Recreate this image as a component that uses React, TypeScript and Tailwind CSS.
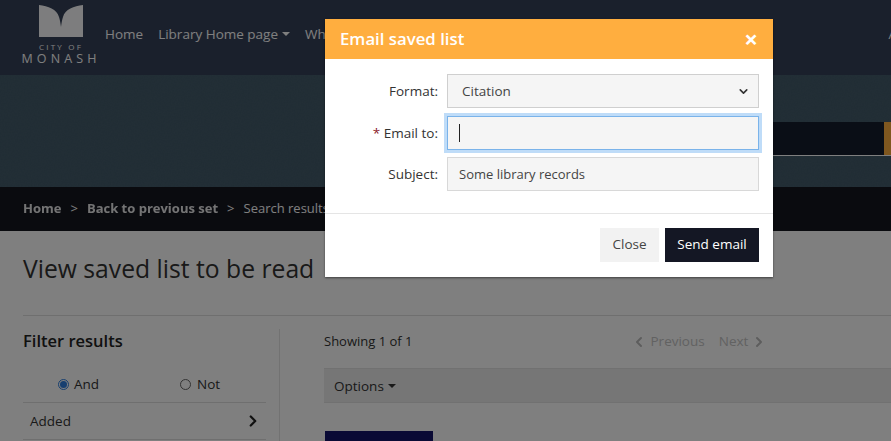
import React from "react";
import { ChevronDown, ChevronLeft, ChevronRight } from "lucide-react";

function Caret({ className = "" }: { className?: string }) {
  return <span className={`inline-block w-0 h-0 border-x-[4px] border-x-transparent border-t-[4px] border-t-current ${className}`} />;
}

function Logo() {
  return (
    <div className="flex flex-col items-center w-[78px] ml-[22px] pt-[5px]">
      <svg width="44" height="33" viewBox="0 0 44 33" className="block">
        <path d="M0 0 C9 1 18 4 20 12 C21 15 21.5 18 22 22 C22.5 18 23 15 24 12 C26 4 35 1 44 0 L44 32 L0 32 Z" fill="#fff" fillOpacity="0.98" />
      </svg>
      <div className="mt-[4px] mb-[1px] text-[8px] leading-[9px] tracking-[2.2px] text-white">CITY OF</div>
      <div className="text-[12.5px] leading-[13px] tracking-[4.1px] text-white whitespace-nowrap">MONASH</div>
    </div>
  );
}

function Field({ label, required, children }: { label: string; required?: boolean; children: React.ReactNode }) {
  return (
    <div className="flex items-center">
      <label className="w-[113px] text-right text-[13.5px] text-[#333]">
        {required && <span className="text-[#8b1a2b]">* </span>}
        {label}
      </label>
      <div className="ml-[9px] w-[312px]">{children}</div>
    </div>
  );
}

export default function App() {
  return (
    <div className="relative w-[891px] h-[441px] overflow-hidden bg-white font-['Open_Sans',sans-serif] text-[#333]">
      {/* Nav */}
      <nav className="h-[75px] bg-[#354159] flex items-start">
        <Logo />
        <div className="ml-[5px] mt-[24px] flex items-center text-[13.5px] leading-[20px] text-white whitespace-nowrap w-[792px] shrink-0">
          <span>Home</span>
          <span className="ml-[15px]">Library Home page</span>
          <Caret className="ml-[4px]" />
          <span className="ml-[15px]">What's</span>
          <span className="ml-auto">A</span>
        </div>
      </nav>

      {/* Hero */}
      <section className="relative h-[112px] bg-[#415a69] overflow-hidden">
        <svg className="absolute inset-0 w-full h-full opacity-30" aria-hidden="true">
          <filter id="grain">
            <feTurbulence type="fractalNoise" baseFrequency="0.7" numOctaves="2" />
            <feColorMatrix values="0 0 0 0 0.1  0 0 0 0 0.15  0 0 0 0 0.2  0 0 0 1.2 -0.2" />
          </filter>
          <rect width="100%" height="100%" filter="url(#grain)" />
        </svg>
        <div className="relative mt-[47px] ml-[400px] h-[34px] flex bg-[#141c2c] border-b border-b-white">
          <div className="flex-1" />
          <div className="w-[7px] bg-[#ffae3f]" />
        </div>
      </section>

      {/* Breadcrumb */}
      <div className="h-[44px] bg-[#14161f] flex items-center pl-[23px] text-[13px] text-white whitespace-nowrap">
        <span className="font-bold opacity-90">Home</span>
        <span className="mx-[9px]">&gt;</span>
        <span className="font-bold opacity-90">Back to previous set</span>
        <span className="mx-[9px]">&gt;</span>
        <span>Search results</span>
      </div>

      {/* Main */}
      <main className="pl-[23px]">
        <h1 className="pt-[21px] pb-[30px] text-[24.7px] leading-[33px] font-medium text-[#333] border-b border-b-[#dedede] whitespace-nowrap">
          View saved list to be read
        </h1>
        <div className="flex mt-[14px]">
          <aside className="w-[256px] shrink-0">
            <h2 className="text-[16.5px] leading-[22px] font-semibold text-[#222]">Filter results</h2>
            <div className="flex mt-[23px] pl-[35px] pb-[8px] border-b border-b-[#dedede] w-[243px] text-[13.5px] leading-[19px]">
              <label className="flex items-center w-[122px]">
                <span className="w-[11px] h-[11px] rounded-full border border-[#2f7fe0] bg-white flex items-center justify-center mr-[5px]">
                  <span className="w-[7px] h-[7px] rounded-full bg-[#2f7fe0]" />
                </span>
                And
              </label>
              <label className="flex items-center">
                <span className="w-[11px] h-[11px] rounded-full border border-[#666] bg-white mr-[6px]" />
                Not
              </label>
            </div>
            <div className="flex items-center justify-between w-[243px] h-[37px] pl-[7px] pr-[4px] border-b border-b-[#dedede] text-[13.5px]">
              <span>Added</span>
              <ChevronRight size={18} strokeWidth={3} className="text-[#222]" />
            </div>
          </aside>
          <div className="w-px h-[130px] bg-[#e4e4e4] -mt-[1px]" />
          <section className="ml-[44px] flex-1">
            <div className="flex items-center h-[22px] pt-[1px] text-[13px]">
              <span>Showing 1 of 1</span>
              <div className="ml-[218px] flex items-center text-[13.5px] text-[#c4c4c4]">
                <ChevronLeft size={16} strokeWidth={3} className="text-[#bbb]" />
                <span className="ml-[4px]">Previous</span>
                <span className="ml-[14px]">Next</span>
                <ChevronRight size={16} strokeWidth={3} className="ml-[3px] text-[#bbb]" />
              </div>
            </div>
            <div className="mt-[16px] h-[35px] flex items-center pl-[10px] pt-[1px] bg-[#ececec] border-y border-y-[#e2e2e2] text-[13.5px]">
              Options
              <Caret className="ml-[4px]" />
            </div>
            <div className="mt-[28px] ml-px w-[108px] h-[40px] bg-[#14146a]" />
          </section>
        </div>
      </main>

      {/* Backdrop */}
      <div className="absolute inset-0 bg-black/50" />

      {/* Modal */}
      <div role="dialog" className="absolute left-[325px] top-[19px] w-[448px] h-[258px] bg-white flex flex-col shadow-[0_1px_2px_rgba(0,0,0,0.5)]">
        <div className="h-[40px] bg-[#ffae3f] flex items-center justify-between pl-[15px] pr-[15px] text-white">
          <span className="text-[16.8px] font-semibold">Email saved list</span>
          <span className="text-[24px] font-bold leading-none">×</span>
        </div>
        <div className="flex-1 flex flex-col gap-[7px] pt-[15px] border-b border-b-[#e5e5e5]">
          <Field label="Format:">
            <div className="h-[34px] bg-[#f5f5f5] border border-[#cfcfcf] flex items-center justify-between pl-[14px] pr-[8px] text-[13.5px] text-[#444]">
              Citation
              <ChevronDown size={13} strokeWidth={3} className="text-[#333]" />
            </div>
          </Field>
          <div className="pt-px">
            <Field label="Email to:" required>
              <div className="h-[34px] bg-[#f5f5f5] border border-[#7ab3ea] shadow-[0_0_0_3px_#bfdcf8] flex items-center pl-[11px]">
                <span className="w-px h-[18px] bg-[#222]" />
              </div>
            </Field>
          </div>
          <Field label="Subject:">
            <div className="h-[34px] bg-[#f5f5f5] border border-[#d8d8d8] flex items-center pl-[11px] pt-[2px] text-[13px] text-[#444]">
              Some library records
            </div>
          </Field>
        </div>
        <div className="h-[63px] flex items-center justify-end gap-[6px] pr-[14px] pb-[2px] text-[13.5px]">
          <button className="w-[59px] h-[34px] bg-[#f2f2f2] text-[#444]">Close</button>
          <button className="w-[94px] h-[34px] bg-[#141724] text-white">Send email</button>
        </div>
      </div>
    </div>
  );
}
